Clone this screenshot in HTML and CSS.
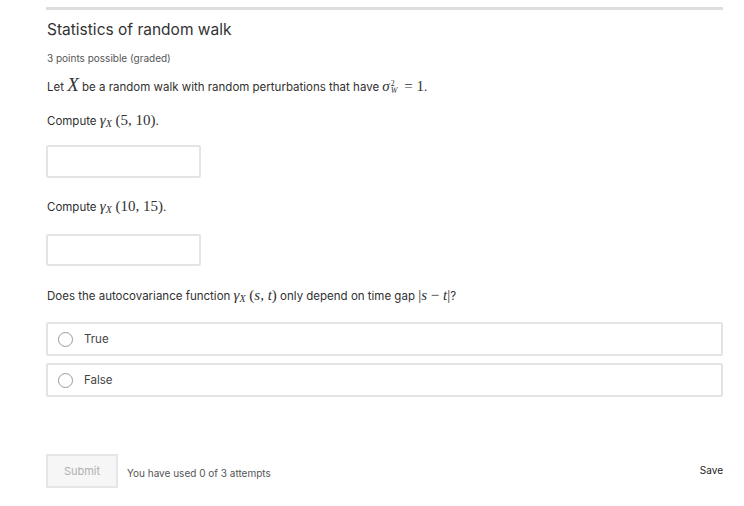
FILE: index.html
```html
<!DOCTYPE html>
<html lang="en">
<head>
    <meta charset="UTF-8">
    <title>Statistics of random walk</title>
    <link rel="stylesheet" href="styles.css">
</head>
<body>
    <div class="problem">
        <div class="top-rule"></div>
        <h3 class="title">Statistics of random walk</h3>
        <div class="points">3 points possible (graded)</div>

        <p class="intro">Let <span class="math big">X</span> be a random walk with random perturbations that have <span class="math"><i>σ</i><span class="supsub"><span>2</span><span><i>W</i></span></span> = 1</span>.</p>

        <p class="prompt">Compute <span class="math"><i>γ</i><span class="sub"><i>X</i></span> (5, 10)</span>.</p>
        <input class="answer" type="text">

        <p class="prompt second">Compute <span class="math"><i>γ</i><span class="sub"><i>X</i></span> (10, 15)</span>.</p>
        <input class="answer" type="text">

        <p class="prompt question">Does the autocovariance function <span class="math"><i>γ</i><span class="sub"><i>X</i></span> (<i>s</i>, <i>t</i>)</span> only depend on time gap <span class="math">|<i>s</i> − <i>t</i>|</span>?</p>

        <label class="choice first">
            <span class="radio"></span>
            <span>True</span>
        </label>
        <label class="choice">
            <span class="radio"></span>
            <span>False</span>
        </label>

        <div class="actions">
            <button class="submit" disabled>Submit</button>
            <span class="attempts">You have used 0 of 3 attempts</span>
            <span class="save">Save</span>
        </div>
    </div>
</body>
</html>
```

FILE: styles.css
```css
/* Global Styles */
body {
    font-family: Inter, "Noto Sans", sans-serif;
    background-color: #fff;
    color: #313131;
    margin: 0;
    padding: 0;
}
.problem {
    width: 677px;
    margin-left: 46px;
    padding-top: 7px;
}
.top-rule {
    height: 3px;
    background-color: #dedede;
}
.title {
    font-size: 15.5px;
    font-weight: 400;
    color: #333;
    margin: 10px 0 0 1px;
    line-height: 20px;
}
.points {
    font-size: 10px;
    color: #555;
    margin: 11px 0 0 1px;
    line-height: 14px;
}
p {
    margin: 0;
    font-size: 11.5px;
    line-height: 18px;
    height: 18px;
    padding-left: 1px;
}
.intro {
    margin-top: 13px;
}
.prompt {
    margin-top: 16px;
}
.prompt.second {
    margin-top: 20px;
}
.prompt.question {
    margin-top: 21px;
}
.math {
    font-family: "Liberation Serif", "DejaVu Serif", serif;
    font-size: 15px;
    line-height: 0;
}
.math.big {
    font-style: italic;
    font-size: 19px;
}
.math .sub {
    font-size: 10px;
    position: relative;
    top: 2px;
}
.supsub {
    display: inline-flex;
    flex-direction: column;
    vertical-align: 5px;
    line-height: 7px;
    font-size: 8px;
    margin: 0 3px 0 1px;
}
.answer {
    display: block;
    width: 155px;
    height: 33px;
    box-sizing: border-box;
    border: 2px solid #e4e4e4;
    border-radius: 2px;
    margin-top: 15px;
    font: inherit;
}
.prompt.second + .answer {
    margin-top: 18px;
    height: 32px;
}
.choice {
    display: flex;
    align-items: center;
    gap: 11px;
    height: 34px;
    box-sizing: border-box;
    border: 2px solid #e4e4e4;
    border-radius: 2px;
    padding-left: 10px;
    font-size: 11.5px;
    color: #444;
    margin-top: 7px;
}
.choice.first {
    margin-top: 17px;
}
.radio {
    width: 13px;
    height: 13px;
    border: 1px solid #9a9a9a;
    border-radius: 50%;
}
.actions {
    display: flex;
    align-items: center;
    margin-top: 57px;
}
.submit {
    width: 72px;
    height: 34px;
    background-color: #f6f6f6;
    border: 2px solid #e6e6e6;
    color: #b0b0b0;
    font-family: inherit;
    font-size: 11px;
    padding: 0;
}
.attempts {
    font-size: 10px;
    color: #555;
    margin-left: 9px;
    margin-top: 3px;
}
.save {
    margin-left: auto;
    font-size: 10px;
    color: #222;
    margin-top: -3px;
}
```
